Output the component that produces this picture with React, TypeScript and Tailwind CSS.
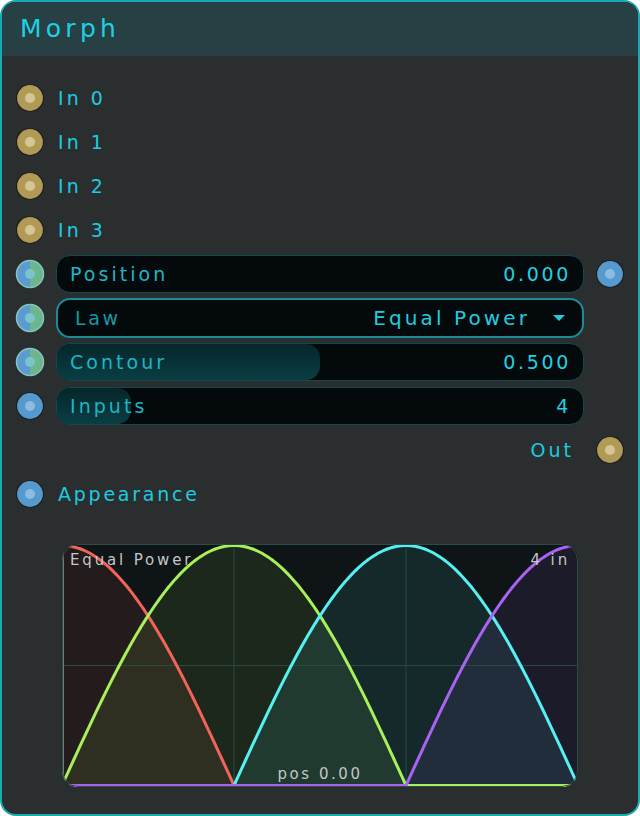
import React from 'react';

type PortKind = 'gold' | 'blue' | 'mixed';

function Port({ kind }: { kind: PortKind }) {
  if (kind === 'mixed') {
    return (
      <svg width="30" height="30" viewBox="0 0 30 30" className="shrink-0">
        <clipPath id="pl">
          <rect x="0" y="0" width="15" height="30" />
        </clipPath>
        <circle cx="15" cy="15" r="13.5" fill="#6db68c" />
        <circle cx="15" cy="15" r="13.5" fill="#5a9bd2" clipPath="url(#pl)" />
        <circle cx="15" cy="15" r="13.5" fill="none" stroke="#86c4bf" strokeWidth="1.5" />
        <circle cx="15" cy="15" r="5" fill="#7cc4cc" />
      </svg>
    );
  }
  const fill = kind === 'gold' ? '#b19a55' : '#5699cf';
  const dot = kind === 'gold' ? '#d6c697' : '#8ebbe0';
  return (
    <svg width="30" height="30" viewBox="0 0 30 30" className="shrink-0">
      <circle cx="15" cy="15" r="13.5" fill={fill} stroke="#1d1f1f" strokeWidth="1.2" />
      <circle cx="15" cy="15" r="5" fill={dot} />
    </svg>
  );
}

function InputRow({ label }: { label: string }) {
  return (
    <div className="flex h-[44px] items-center gap-[13px] pl-[13px]">
      <Port kind="gold" />
      <span className="text-[19px] tracking-[0.16em] text-[#1ccbe0]">{label}</span>
    </div>
  );
}

function Slider({
  label,
  value,
  fill,
}: {
  label: string;
  value: string;
  fill?: number;
}) {
  return (
    <div className="relative flex h-[38px] flex-1 items-center justify-between overflow-hidden rounded-[14px] border border-[#0f4a50] bg-[#04090b] pl-[13px] pr-[12px]">
      {fill !== undefined && (
        <div
          className="absolute inset-y-0 left-0 rounded-r-[14px] bg-gradient-to-b from-[#06262a] to-[#0a3e43]"
          style={{ width: `${fill}%` }}
        />
      )}
      <span className="relative text-[19px] tracking-[0.16em] text-[#1db6c6]">{label}</span>
      <span className="relative text-[19px] tracking-[0.14em] text-[#1fd2e4]">{value}</span>
    </div>
  );
}

function curvePath(i: number, w: number, h: number, close: boolean) {
  const step = w / 3;
  const xi = i * step;
  const top = 1.5;
  const bottom = h - 1.5;
  const pts: string[] = [];
  for (let x = 0; x <= w; x += 2) {
    const d = Math.min(Math.abs(x - xi) / step, 1);
    const amp = Math.cos((d * Math.PI) / 2);
    const y = bottom - (bottom - top) * amp;
    pts.push(`${x.toFixed(1)},${y.toFixed(2)}`);
  }
  let d = 'M' + pts.join(' L');
  if (close) d += ` L${w},${h} L0,${h} Z`;
  return d;
}

function Chart() {
  const w = 516;
  const h = 243;
  const colors = ['#f2645a', '#a8f05a', '#55f0f2', '#a863f2'];
  return (
    <div className="relative mx-auto mt-[28px] h-[243px] w-[516px] overflow-hidden rounded-[16px] bg-[#0f1417]">
      <svg width={w} height={h} viewBox={`0 0 ${w} ${h}`} className="block">
        {colors.map((c, i) => (
          <path key={'f' + i} d={curvePath(i, w, h, true)} fill={c} fillOpacity="0.09" />
        ))}
        <line x1="172" y1="0" x2="172" y2={h} stroke="#274a42" strokeWidth="1" />
        <line x1="344" y1="0" x2="344" y2={h} stroke="#274a42" strokeWidth="1" />
        <line x1="0" y1="121.5" x2={w} y2="121.5" stroke="#274a42" strokeWidth="1" />
        {colors.map((c, i) => (
          <path key={'s' + i} d={curvePath(i, w, h, false)} fill="none" stroke={c} strokeWidth="3" />
        ))}
        <line x1="1" y1="0" x2="1" y2={h} stroke="#b8d6d2" strokeOpacity="0.7" strokeWidth="1.5" />
      </svg>
      <div className="pointer-events-none absolute inset-0 rounded-[16px] border border-[#2b4a4c]" />
      <span className="absolute left-[8px] top-[5px] text-[15px] tracking-[0.19em] text-[#c2c6c6]">
        Equal Power
      </span>
      <span className="absolute right-[8px] top-[5px] text-[15px] tracking-[0.19em] text-[#c2c6c6]">
        4 in
      </span>
      <span className="absolute bottom-[2px] left-0 right-0 text-center text-[15px] tracking-[0.17em] text-[#c2c6c6]">
        pos 0.00
      </span>
    </div>
  );
}

export default function App() {
  return (
    <div
      className="h-[816px] w-[640px] overflow-hidden rounded-[16px] border-2 border-[#19a9b4] bg-[#2a2e2f]"
      style={{ fontFamily: '"DejaVu Sans", "Liberation Sans", sans-serif' }}
    >
      <div className="flex h-[54px] items-center bg-[#264044] pl-[18px]">
        <span className="text-[25px] tracking-[0.17em] text-[#1fd0e2]">Morph</span>
      </div>

      <div className="pt-[20px]">
        <InputRow label="In 0" />
        <InputRow label="In 1" />
        <InputRow label="In 2" />
        <InputRow label="In 3" />

        <div className="flex h-[44px] items-center gap-[11px] pl-[13px] pr-[13px]">
          <Port kind="mixed" />
          <Slider label="Position" value="0.000" />
          <Port kind="blue" />
        </div>

        <div className="flex h-[44px] items-center gap-[11px] pl-[13px] pr-[54px]">
          <Port kind="mixed" />
          <div className="flex h-[40px] flex-1 items-center justify-between rounded-[14px] border-2 border-[#1a8c97] bg-[#04090b] pl-[17px] pr-[16px]">
            <span className="text-[19px] tracking-[0.14em] text-[#1598a8]">Law</span>
            <span className="flex items-center gap-[22px] text-[20px] tracking-[0.155em] text-[#20cde0]">
              Equal Power
              <svg width="14" height="8" viewBox="0 0 14 8">
                <path d="M1 1 L13 1 L7 7 Z" fill="#20cde0" />
              </svg>
            </span>
          </div>
        </div>

        <div className="flex h-[44px] items-center gap-[11px] pl-[13px] pr-[54px]">
          <Port kind="mixed" />
          <Slider label="Contour" value="0.500" fill={50} />
        </div>

        <div className="flex h-[44px] items-center gap-[11px] pl-[13px] pr-[54px]">
          <Port kind="blue" />
          <Slider label="Inputs" value="4" fill={14} />
        </div>

        <div className="flex h-[44px] items-center justify-end gap-[21px] pr-[13px]">
          <span className="text-[19px] tracking-[0.16em] text-[#1ccbe0]">Out</span>
          <Port kind="gold" />
        </div>

        <div className="flex h-[44px] items-center gap-[13px] pl-[13px]">
          <Port kind="blue" />
          <span className="text-[19px] tracking-[0.145em] text-[#1ccbe0]">Appearance</span>
        </div>

        <Chart />
      </div>
    </div>
  );
}
